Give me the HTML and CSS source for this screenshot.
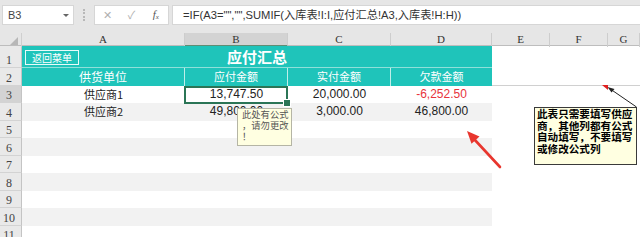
FILE: index.html
```html
<!DOCTYPE html>
<html lang="zh-CN">
<head>
<meta charset="utf-8">
<title>应付汇总</title>
<link rel="stylesheet" href="styles.css">
</head>
<body>
<div class="app">
  <div class="fbar">
    <div class="namebox"><span>B3</span><span class="dd"></span></div>
    <div class="grip"></div>
    <div class="fbtns"><span class="fb-x">✕</span><span class="fb-ok">✓</span><span class="fb-fx">f<sub>x</sub></span></div>
    <div class="formula">=IF(A3="","",SUMIF(入库表!I:I,应付汇总!A3,入库表!H:H))</div>
  </div>

  <div class="sheet">
    <div class="row colhdr">
      <div class="corner"><span class="tri"></span></div>
      <div class="ch">A</div><div class="ch selcol">B</div><div class="ch">C</div><div class="ch">D</div><div class="ch">E</div><div class="ch">F</div><div class="ch">G</div>
    </div>

    <div class="row r1">
      <div class="rh">1</div>
      <div class="title">
        <span class="backbtn">返回菜单</span>
        <span class="title-text">应付汇总</span>
      </div>
      <div></div><div></div><div></div>
    </div>

    <div class="row r2">
      <div class="rh">2</div>
      <div class="hd hd-big">供货单位</div>
      <div class="hd">应付金额</div>
      <div class="hd">实付金额</div>
      <div class="hd">欠款金额</div>
      <div class="ln"></div><div class="ln"></div><div class="ln"></div>
    </div>

    <div class="row">
      <div class="rh selrow">3</div>
      <div class="c name">供应商1</div>
      <div class="c num selcell">13,747.50</div>
      <div class="c num">20,000.00</div>
      <div class="c num neg">-6,252.50</div>
      <div></div><div></div><div></div>
    </div>

    <div class="row band">
      <div class="rh">4</div>
      <div class="c name">供应商2</div>
      <div class="c num">49,800.00</div>
      <div class="c num">3,000.00</div>
      <div class="c num">46,800.00</div>
      <div></div><div></div><div></div>
    </div>

    <div class="row"><div class="rh">5</div><div class="c"></div><div class="c"></div><div class="c"></div><div class="c"></div><div></div><div></div><div></div></div>
    <div class="row band"><div class="rh">6</div><div class="c"></div><div class="c"></div><div class="c"></div><div class="c"></div><div></div><div></div><div></div></div>
    <div class="row"><div class="rh">7</div><div class="c"></div><div class="c"></div><div class="c"></div><div class="c"></div><div></div><div></div><div></div></div>
    <div class="row band"><div class="rh">8</div><div class="c"></div><div class="c"></div><div class="c"></div><div class="c"></div><div></div><div></div><div></div></div>
    <div class="row"><div class="rh">9</div><div class="c"></div><div class="c"></div><div class="c"></div><div class="c"></div><div></div><div></div><div></div></div>
    <div class="row band"><div class="rh">10</div><div class="c"></div><div class="c"></div><div class="c"></div><div class="c"></div><div></div><div></div><div></div></div>
    <div class="row"><div class="rh">11</div><div class="c"></div><div class="c"></div><div class="c"></div><div class="c"></div><div></div><div></div><div></div></div>
  </div>

  <div class="note note-small"><p>此处有公式</p><p>，请勿更改</p><p>！</p></div>
  <div class="note note-big"><p>此表只需要填写供应</p><p>商，其他列都有公式</p><p>自动填写，不要填写</p><p>或修改公式列</p></div>

  <svg class="marks" width="640" height="237" viewBox="0 0 640 237" xmlns="http://www.w3.org/2000/svg">
    <polygon points="602,85 608,85 608,90" fill="#e02020"/>
    <line x1="636.5" y1="107" x2="611" y2="89.5" stroke="#222" stroke-width="1"/>
    <polygon points="607.5,87 614.5,89 611.5,92.5" fill="#222"/>
    <line x1="500" y1="167" x2="474" y2="139" stroke="#e8362e" stroke-width="2.6" stroke-linecap="round"/>
    <polygon points="467,131 479.5,136.5 471.5,143.8" fill="#e8362e"/>
  </svg>
</div>
</body>
</html>
```

FILE: styles.css
```css
* { box-sizing: border-box; margin: 0; padding: 0; }

body {
  margin: 0;
  width: 640px;
  height: 237px;
  overflow: hidden;
  background: #ffffff;
  font-family: "Liberation Sans", "Noto Sans CJK SC", sans-serif;
}

.app {
  position: relative;
  width: 640px;
  height: 237px;
  overflow: hidden;
}

/* ---------- formula bar ---------- */
.fbar {
  height: 33px;
  background: #e6e6e6;
  display: flex;
  align-items: flex-start;
  padding-top: 5px;
}

.namebox {
  width: 72px;
  height: 20px;
  margin-left: 2px;
  background: #fff;
  border: 1px solid #d6d6d6;
  display: flex;
  align-items: center;
  justify-content: space-between;
  padding: 0 4px 0 5px;
  font-size: 11px;
  color: #444;
}

.dd {
  width: 0;
  height: 0;
  border-left: 3px solid transparent;
  border-right: 3px solid transparent;
  border-top: 3px solid #666;
}

.grip {
  width: 2px;
  height: 12px;
  margin: 4px 9px 0 9px;
  border-left: 2px dotted #b8b8b8;
}

.fbtns {
  width: 75px;
  height: 20px;
  background: #fff;
  border: 1px solid #d6d6d6;
  display: flex;
  align-items: center;
}

.fbtns span {
  width: 25px;
  text-align: center;
  color: #b0b0b0;
  font-size: 11px;
  line-height: 18px;
}

.fbtns .fb-fx {
  font-family: "Liberation Serif", serif;
  font-style: italic;
  color: #555;
  font-size: 11px;
}

.fbtns .fb-fx sub {
  font-size: 7px;
  vertical-align: baseline;
  position: relative;
  top: 1px;
}

.formula {
  flex: 1;
  height: 20px;
  margin-left: 3px;
  background: #fff;
  border: 1px solid #d6d6d6;
  border-right: none;
  padding-left: 10px;
  font-size: 11.2px;
  line-height: 18px;
  color: #333;
  white-space: nowrap;
  overflow: hidden;
}

/* ---------- sheet ---------- */
.row {
  display: grid;
  grid-template-columns: 22px 163px 103px 103px 101px 58px 58px 1fr;
  height: 17.5px;
}

.colhdr {
  height: 13px;
  background: #e6e6e6;
  border-bottom: 1px solid #bdbdbd;
}

.corner {
  position: relative;
  border-right: 1px solid #cfcfcf;
}

.tri {
  position: absolute;
  right: 3px;
  bottom: 2px;
  width: 0;
  height: 0;
  border-left: 8px solid transparent;
  border-bottom: 8px solid #b7b7b7;
}

.ch {
  font-family: "Liberation Serif", serif;
  font-size: 11px;
  line-height: 13px;
  text-align: center;
  color: #333;
  border-right: 1px solid #cdcdcd;
}

.selcol {
  background: #d3d3d3;
  border-bottom: 2px solid #5f8d74;
  line-height: 12px;
}

.rh {
  background: #e9e9e9;
  border-right: 1px solid #c4c4c4;
  border-bottom: 1px solid #d3d3d3;
  font-family: "Liberation Serif", serif;
  font-size: 12px;
  color: #444;
  display: flex;
  align-items: flex-end;
  justify-content: center;
  padding-right: 3px;
  line-height: 14px;
}

.selrow {
  background: #d3d3d3;
}

/* row 1 */
.r1 { height: 22px; }

.title {
  grid-column: span 4;
  position: relative;
  background: #1fc4ba;
  display: flex;
  align-items: center;
  justify-content: center;
  border-bottom: 1px solid #8fe0d9;
}

.title-text {
  color: #fff;
  font-family: "Noto Sans CJK SC", sans-serif;
  font-weight: 700;
  font-size: 15px;
  line-height: 20px;
}

.backbtn {
  position: absolute;
  left: 3px;
  top: 4px;
  width: 54px;
  height: 15px;
  border: 1px solid #e8fbf9;
  color: #fff;
  font-family: "Noto Sans CJK SC", sans-serif;
  font-size: 10px;
  line-height: 13px;
  text-align: center;
}

/* row 2 */
.hd {
  background: #1fc4ba;
  color: #fff;
  font-family: "Noto Sans CJK SC", sans-serif;
  font-size: 11px;
  line-height: 17px;
  text-align: center;
  border-right: 1px solid #bfeee9;
}

.hd:nth-child(5) { border-right: none; }

.hd-big { font-size: 12px; }

.ln { border-bottom: 1px solid #d0d0d0; }

/* data cells */
.c {
  font-size: 12px;
  line-height: 17.5px;
  text-align: center;
  color: #222;
  white-space: nowrap;
}

.c.name {
  font-family: "Noto Sans CJK SC", sans-serif;
  font-size: 11px;
}

.band .c { background: #f2f2f2; }

.neg { color: #e8333b; }

.selcell {
  position: relative;
}

.selcell::after {
  content: "";
  position: absolute;
  left: -1px;
  top: 0;
  right: 0;
  bottom: -1px;
  border: 2px solid #2b7556;
}

.selcell::before {
  content: "";
  position: absolute;
  right: -3px;
  bottom: -4px;
  width: 6px;
  height: 6px;
  background: #2b7556;
  border: 1px solid #fff;
  z-index: 2;
}

/* ---------- comments ---------- */
.note {
  position: absolute;
  background: #ffffe1;
  white-space: nowrap;
  font-family: "Noto Sans CJK SC", sans-serif;
}

.note-small {
  left: 237px;
  top: 108px;
  width: 55px;
  height: 38px;
  border: 1px solid #b5b5a5;
  padding: 0 0 0 4px;
  font-size: 9.3px;
  line-height: 11px;
  color: #555;
}

.note-big {
  left: 534px;
  top: 107px;
  width: 103px;
  height: 58px;
  border: 1px solid #3a3a3a;
  padding: 0 0 0 2px;
  font-size: 10.6px;
  line-height: 11.5px;
  font-weight: 700;
  color: #000;
}

.marks {
  position: absolute;
  left: 0;
  top: 0;
  pointer-events: none;
}
```
